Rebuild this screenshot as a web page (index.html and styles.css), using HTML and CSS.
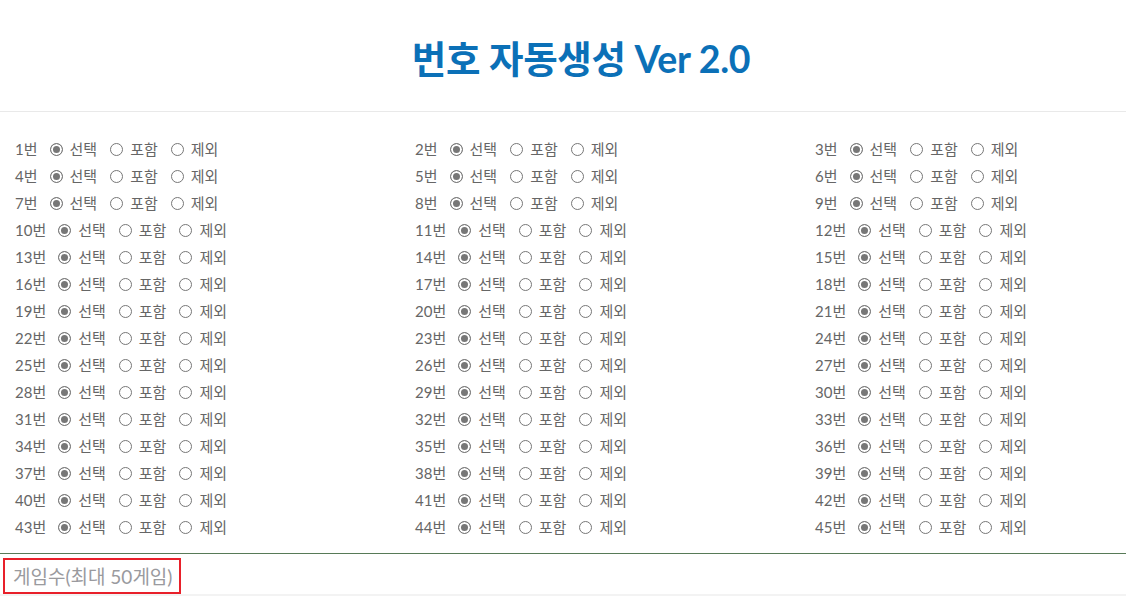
FILE: index.html
```html
<!DOCTYPE html>
<html lang="ko">
<head>
<meta charset="utf-8">
<title>번호 자동생성 Ver 2.0</title>
<link rel="stylesheet" href="styles.css">
</head>
<body>
<div class="page">
  <header class="header">
    <h1 class="title">번호 자동생성 Ver 2.0</h1>
  </header>
  <section class="grid">
    <div class="item"><span class="num">1번</span><label class="opt"><input type="radio" name="n1" checked>선택</label><label class="opt"><input type="radio" name="n1">포함</label><label class="opt"><input type="radio" name="n1">제외</label></div>
    <div class="item"><span class="num">2번</span><label class="opt"><input type="radio" name="n2" checked>선택</label><label class="opt"><input type="radio" name="n2">포함</label><label class="opt"><input type="radio" name="n2">제외</label></div>
    <div class="item"><span class="num">3번</span><label class="opt"><input type="radio" name="n3" checked>선택</label><label class="opt"><input type="radio" name="n3">포함</label><label class="opt"><input type="radio" name="n3">제외</label></div>
    <div class="item"><span class="num">4번</span><label class="opt"><input type="radio" name="n4" checked>선택</label><label class="opt"><input type="radio" name="n4">포함</label><label class="opt"><input type="radio" name="n4">제외</label></div>
    <div class="item"><span class="num">5번</span><label class="opt"><input type="radio" name="n5" checked>선택</label><label class="opt"><input type="radio" name="n5">포함</label><label class="opt"><input type="radio" name="n5">제외</label></div>
    <div class="item"><span class="num">6번</span><label class="opt"><input type="radio" name="n6" checked>선택</label><label class="opt"><input type="radio" name="n6">포함</label><label class="opt"><input type="radio" name="n6">제외</label></div>
    <div class="item"><span class="num">7번</span><label class="opt"><input type="radio" name="n7" checked>선택</label><label class="opt"><input type="radio" name="n7">포함</label><label class="opt"><input type="radio" name="n7">제외</label></div>
    <div class="item"><span class="num">8번</span><label class="opt"><input type="radio" name="n8" checked>선택</label><label class="opt"><input type="radio" name="n8">포함</label><label class="opt"><input type="radio" name="n8">제외</label></div>
    <div class="item"><span class="num">9번</span><label class="opt"><input type="radio" name="n9" checked>선택</label><label class="opt"><input type="radio" name="n9">포함</label><label class="opt"><input type="radio" name="n9">제외</label></div>
    <div class="item"><span class="num">10번</span><label class="opt"><input type="radio" name="n10" checked>선택</label><label class="opt"><input type="radio" name="n10">포함</label><label class="opt"><input type="radio" name="n10">제외</label></div>
    <div class="item"><span class="num">11번</span><label class="opt"><input type="radio" name="n11" checked>선택</label><label class="opt"><input type="radio" name="n11">포함</label><label class="opt"><input type="radio" name="n11">제외</label></div>
    <div class="item"><span class="num">12번</span><label class="opt"><input type="radio" name="n12" checked>선택</label><label class="opt"><input type="radio" name="n12">포함</label><label class="opt"><input type="radio" name="n12">제외</label></div>
    <div class="item"><span class="num">13번</span><label class="opt"><input type="radio" name="n13" checked>선택</label><label class="opt"><input type="radio" name="n13">포함</label><label class="opt"><input type="radio" name="n13">제외</label></div>
    <div class="item"><span class="num">14번</span><label class="opt"><input type="radio" name="n14" checked>선택</label><label class="opt"><input type="radio" name="n14">포함</label><label class="opt"><input type="radio" name="n14">제외</label></div>
    <div class="item"><span class="num">15번</span><label class="opt"><input type="radio" name="n15" checked>선택</label><label class="opt"><input type="radio" name="n15">포함</label><label class="opt"><input type="radio" name="n15">제외</label></div>
    <div class="item"><span class="num">16번</span><label class="opt"><input type="radio" name="n16" checked>선택</label><label class="opt"><input type="radio" name="n16">포함</label><label class="opt"><input type="radio" name="n16">제외</label></div>
    <div class="item"><span class="num">17번</span><label class="opt"><input type="radio" name="n17" checked>선택</label><label class="opt"><input type="radio" name="n17">포함</label><label class="opt"><input type="radio" name="n17">제외</label></div>
    <div class="item"><span class="num">18번</span><label class="opt"><input type="radio" name="n18" checked>선택</label><label class="opt"><input type="radio" name="n18">포함</label><label class="opt"><input type="radio" name="n18">제외</label></div>
    <div class="item"><span class="num">19번</span><label class="opt"><input type="radio" name="n19" checked>선택</label><label class="opt"><input type="radio" name="n19">포함</label><label class="opt"><input type="radio" name="n19">제외</label></div>
    <div class="item"><span class="num">20번</span><label class="opt"><input type="radio" name="n20" checked>선택</label><label class="opt"><input type="radio" name="n20">포함</label><label class="opt"><input type="radio" name="n20">제외</label></div>
    <div class="item"><span class="num">21번</span><label class="opt"><input type="radio" name="n21" checked>선택</label><label class="opt"><input type="radio" name="n21">포함</label><label class="opt"><input type="radio" name="n21">제외</label></div>
    <div class="item"><span class="num">22번</span><label class="opt"><input type="radio" name="n22" checked>선택</label><label class="opt"><input type="radio" name="n22">포함</label><label class="opt"><input type="radio" name="n22">제외</label></div>
    <div class="item"><span class="num">23번</span><label class="opt"><input type="radio" name="n23" checked>선택</label><label class="opt"><input type="radio" name="n23">포함</label><label class="opt"><input type="radio" name="n23">제외</label></div>
    <div class="item"><span class="num">24번</span><label class="opt"><input type="radio" name="n24" checked>선택</label><label class="opt"><input type="radio" name="n24">포함</label><label class="opt"><input type="radio" name="n24">제외</label></div>
    <div class="item"><span class="num">25번</span><label class="opt"><input type="radio" name="n25" checked>선택</label><label class="opt"><input type="radio" name="n25">포함</label><label class="opt"><input type="radio" name="n25">제외</label></div>
    <div class="item"><span class="num">26번</span><label class="opt"><input type="radio" name="n26" checked>선택</label><label class="opt"><input type="radio" name="n26">포함</label><label class="opt"><input type="radio" name="n26">제외</label></div>
    <div class="item"><span class="num">27번</span><label class="opt"><input type="radio" name="n27" checked>선택</label><label class="opt"><input type="radio" name="n27">포함</label><label class="opt"><input type="radio" name="n27">제외</label></div>
    <div class="item"><span class="num">28번</span><label class="opt"><input type="radio" name="n28" checked>선택</label><label class="opt"><input type="radio" name="n28">포함</label><label class="opt"><input type="radio" name="n28">제외</label></div>
    <div class="item"><span class="num">29번</span><label class="opt"><input type="radio" name="n29" checked>선택</label><label class="opt"><input type="radio" name="n29">포함</label><label class="opt"><input type="radio" name="n29">제외</label></div>
    <div class="item"><span class="num">30번</span><label class="opt"><input type="radio" name="n30" checked>선택</label><label class="opt"><input type="radio" name="n30">포함</label><label class="opt"><input type="radio" name="n30">제외</label></div>
    <div class="item"><span class="num">31번</span><label class="opt"><input type="radio" name="n31" checked>선택</label><label class="opt"><input type="radio" name="n31">포함</label><label class="opt"><input type="radio" name="n31">제외</label></div>
    <div class="item"><span class="num">32번</span><label class="opt"><input type="radio" name="n32" checked>선택</label><label class="opt"><input type="radio" name="n32">포함</label><label class="opt"><input type="radio" name="n32">제외</label></div>
    <div class="item"><span class="num">33번</span><label class="opt"><input type="radio" name="n33" checked>선택</label><label class="opt"><input type="radio" name="n33">포함</label><label class="opt"><input type="radio" name="n33">제외</label></div>
    <div class="item"><span class="num">34번</span><label class="opt"><input type="radio" name="n34" checked>선택</label><label class="opt"><input type="radio" name="n34">포함</label><label class="opt"><input type="radio" name="n34">제외</label></div>
    <div class="item"><span class="num">35번</span><label class="opt"><input type="radio" name="n35" checked>선택</label><label class="opt"><input type="radio" name="n35">포함</label><label class="opt"><input type="radio" name="n35">제외</label></div>
    <div class="item"><span class="num">36번</span><label class="opt"><input type="radio" name="n36" checked>선택</label><label class="opt"><input type="radio" name="n36">포함</label><label class="opt"><input type="radio" name="n36">제외</label></div>
    <div class="item"><span class="num">37번</span><label class="opt"><input type="radio" name="n37" checked>선택</label><label class="opt"><input type="radio" name="n37">포함</label><label class="opt"><input type="radio" name="n37">제외</label></div>
    <div class="item"><span class="num">38번</span><label class="opt"><input type="radio" name="n38" checked>선택</label><label class="opt"><input type="radio" name="n38">포함</label><label class="opt"><input type="radio" name="n38">제외</label></div>
    <div class="item"><span class="num">39번</span><label class="opt"><input type="radio" name="n39" checked>선택</label><label class="opt"><input type="radio" name="n39">포함</label><label class="opt"><input type="radio" name="n39">제외</label></div>
    <div class="item"><span class="num">40번</span><label class="opt"><input type="radio" name="n40" checked>선택</label><label class="opt"><input type="radio" name="n40">포함</label><label class="opt"><input type="radio" name="n40">제외</label></div>
    <div class="item"><span class="num">41번</span><label class="opt"><input type="radio" name="n41" checked>선택</label><label class="opt"><input type="radio" name="n41">포함</label><label class="opt"><input type="radio" name="n41">제외</label></div>
    <div class="item"><span class="num">42번</span><label class="opt"><input type="radio" name="n42" checked>선택</label><label class="opt"><input type="radio" name="n42">포함</label><label class="opt"><input type="radio" name="n42">제외</label></div>
    <div class="item"><span class="num">43번</span><label class="opt"><input type="radio" name="n43" checked>선택</label><label class="opt"><input type="radio" name="n43">포함</label><label class="opt"><input type="radio" name="n43">제외</label></div>
    <div class="item"><span class="num">44번</span><label class="opt"><input type="radio" name="n44" checked>선택</label><label class="opt"><input type="radio" name="n44">포함</label><label class="opt"><input type="radio" name="n44">제외</label></div>
    <div class="item"><span class="num">45번</span><label class="opt"><input type="radio" name="n45" checked>선택</label><label class="opt"><input type="radio" name="n45">포함</label><label class="opt"><input type="radio" name="n45">제외</label></div>
  </section>
  <section class="games">
    <input class="game-input" type="text" placeholder="게임수(최대 50게임)">
  </section>
  <div class="bottom-band"></div>
</div>
</body>
</html>
```

FILE: styles.css
```css
html, body {
  margin: 0;
  padding: 0;
  background: #ffffff;
  overflow: hidden;
}

body {
  font-family: Lato, "Noto Sans CJK KR", sans-serif;
  color: #666666;
}

.page {
  width: 1126px;
}

.header {
  box-sizing: border-box;
  width: 1126px;
  height: 112px;
  padding: 7px 0 0 36px;
  display: flex;
  align-items: center;
  justify-content: center;
  border-bottom: 1px solid #e9e9e9;
}

.title {
  margin: 0;
  font-size: 37.5px;
  font-weight: 700;
  color: #0b70b7;
  line-height: 1;
  letter-spacing: -0.3px;
}

.grid {
  box-sizing: border-box;
  display: grid;
  grid-template-columns: 400px 400px 1fr;
  grid-auto-rows: 27px;
  padding: 24px 0 12px 15px;
  width: 1126px;
  border-bottom: 1px solid #577a57;
}

.item {
  display: flex;
  align-items: center;
  font-size: 15px;
  line-height: 27px;
  color: #666666;
  white-space: nowrap;
}

.num {
  margin-right: 12px;
}

.opt {
  display: flex;
  align-items: center;
  margin-right: 13px;
}

.opt input {
  appearance: none;
  -webkit-appearance: none;
  width: 13px;
  height: 13px;
  margin: 0 7px 0 0;
  border: 1px solid #777777;
  border-radius: 50%;
  background: #ffffff;
  box-sizing: border-box;
}

.opt input:checked {
  background: #777777;
  box-shadow: inset 0 0 0 2px #ffffff;
}

.games {
  padding: 4px 0 0 3px;
  height: 36px;
}

.game-input {
  box-sizing: border-box;
  width: 178px;
  height: 36px;
  margin: 0;
  border: 2px solid #e8202a;
  padding: 0 0 0 8px;
  font-family: Lato, "Noto Sans CJK KR", sans-serif;
  font-size: 19px;
  color: #555555;
  background: #ffffff;
  outline: none;
}

.game-input::placeholder {
  color: #9a9a9e;
}

.bottom-band {
  height: 10px;
  background: #f3f3f3;
}
```
